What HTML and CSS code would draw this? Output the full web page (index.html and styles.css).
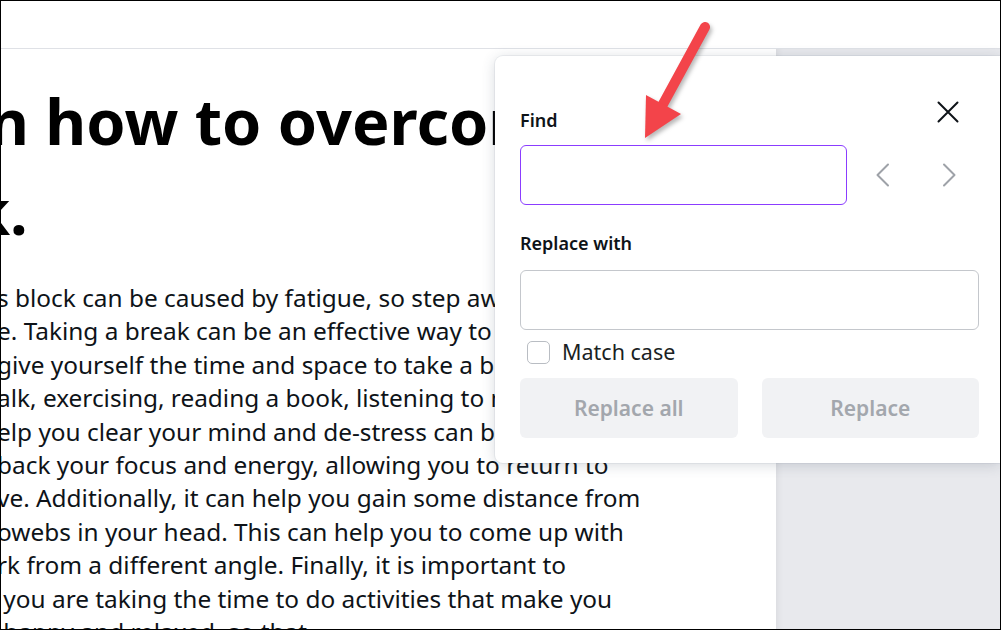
FILE: index.html
```html
<!DOCTYPE html>
<html lang="en">
<head>
<meta charset="utf-8">
<title>Find and replace</title>
<link rel="stylesheet" href="styles.css">
</head>
<body>
<div class="frame">
  <header class="topbar"></header>
  <div class="workspace">
    <main class="page">
      <h1 class="title">
        <span class="title-line">n how to overcome writer’s</span>
        <span class="title-line tail">k.</span>
      </h1>
      <div class="copy">
        <p class="line">s block can be caused by fatigue, so step away from your</p>
        <p class="line">e. Taking a break can be an effective way to recharge and</p>
        <p class="line">give yourself the time and space to take a break. Going</p>
        <p class="line">alk, exercising, reading a book, listening to music, or</p>
        <p class="line">elp you clear your mind and de-stress can be a great</p>
        <p class="line">back your focus and energy, allowing you to return to</p>
        <p class="line">ve. Additionally, it can help you gain some distance from</p>
        <p class="line">owebs in your head. This can help you to come up with</p>
        <p class="line">rk from a different angle. Finally, it is important to</p>
        <p class="line">&nbsp;you are taking the time to do activities that make you</p>
        <p class="line">&nbsp;happy and relaxed, so that</p>
      </div>
    </main>
    <div class="canvas-bg"></div>
  </div>

  <section class="find-panel">
    <div class="panel-head">
      <label class="field-label" for="find">Find</label>
      <button class="icon-btn close-btn" aria-label="Close">
        <svg width="22" height="22" viewBox="0 0 22 22"><path d="M1.5 1.5 L20.5 20.5 M20.5 1.5 L1.5 20.5" stroke="#0e1318" stroke-width="2" fill="none" stroke-linecap="round"/></svg>
      </button>
    </div>
    <div class="find-row">
      <div class="input focused" id="find"></div>
      <div class="nav-btns">
        <button class="icon-btn nav-btn" aria-label="Previous">
          <svg width="14" height="24" viewBox="0 0 14 24"><path d="M12 1.5 L1.5 12 L12 22.5" stroke="#9ea2a8" stroke-width="2" fill="none" stroke-linecap="round" stroke-linejoin="round"/></svg>
        </button>
        <button class="icon-btn nav-btn" aria-label="Next">
          <svg width="14" height="24" viewBox="0 0 14 24"><path d="M2 1.5 L12.5 12 L2 22.5" stroke="#9ea2a8" stroke-width="2" fill="none" stroke-linecap="round" stroke-linejoin="round"/></svg>
        </button>
      </div>
    </div>
    <label class="field-label replace-label">Replace with</label>
    <div class="input"></div>
    <div class="check-row">
      <span class="checkbox"></span>
      <span class="check-text">Match case</span>
    </div>
    <div class="btn-row">
      <button class="btn">Replace all</button>
      <button class="btn">Replace</button>
    </div>
  </section>

  <svg class="arrow" viewBox="0 0 1001 630" width="1001" height="630">
    <g class="arrow-shape">
      <line x1="705" y1="27" x2="662" y2="106" stroke="#f3444a" stroke-width="10" stroke-linecap="round"/>
      <polygon points="645,138 646,95 681,114" fill="#f3444a"/>
    </g>
  </svg>
</div>
</body>
</html>
```

FILE: styles.css
```css
* { box-sizing: border-box; }

html, body {
  margin: 0;
  padding: 0;
  background: #ffffff;
}

.frame {
  position: relative;
  width: 1001px;
  height: 630px;
  border: 1px solid #000000;
  overflow: hidden;
  display: flex;
  flex-direction: column;
  font-family: "Noto Sans", "Open Sans", sans-serif;
  color: #0e1318;
}

.topbar {
  flex: 0 0 48px;
  background: #ffffff;
  border-bottom: 1px solid #dfe1e6;
}

.workspace {
  flex: 1;
  display: flex;
  min-height: 0;
}

.page {
  flex: 0 0 775px;
  background: #ffffff;
  overflow: hidden;
  padding-top: 27px;
}

.canvas-bg {
  flex: 1;
  background: #e8e9ed;
  box-shadow: inset 6px 0 6px -4px rgba(0, 0, 0, 0.06);
}

.title {
  margin: 0 0 0 -13px;
  font-family: "Noto Sans", sans-serif;
  font-weight: 700;
  font-size: 63px;
  line-height: 90px;
  color: #000000;
  white-space: nowrap;
}

.title-line { display: block; }

.title-line.tail { margin-left: -17px; }

.copy {
  margin: 25px 0 0 -4px;
  font-family: "Noto Sans", sans-serif;
  font-size: 24.4px;
  line-height: 33.4px;
  color: #0e1318;
  white-space: nowrap;
}

.line { margin: 0; }

/* Find & replace panel (floating) */
.find-panel {
  position: absolute;
  left: 494px;
  top: 55px;
  width: 505px;
  height: 407px;
  background: #ffffff;
  border-radius: 8px 0 0 8px;
  box-shadow: 0 0 0 1px rgba(64, 87, 109, 0.07), 0 2px 14px rgba(53, 71, 90, 0.2);
  padding: 36px 21px 25px 25px;
  display: flex;
  flex-direction: column;
}

.panel-head {
  height: 40px;
  display: flex;
  align-items: flex-end;
  justify-content: space-between;
}

.field-label {
  font-size: 18px;
  font-weight: 600;
  line-height: 24px;
  color: #0e1318;
}

.icon-btn {
  border: 0;
  background: transparent;
  padding: 0;
  display: flex;
  align-items: center;
  justify-content: center;
}

.close-btn {
  width: 40px;
  height: 40px;
  margin-right: 11px;
  align-self: center;
}

.find-row {
  margin-top: 13px;
  display: flex;
  align-items: center;
}

.find-row .input { flex: 0 0 327px; }

.nav-btns {
  flex: 1;
  display: flex;
  padding-left: 3px;
}

.nav-btn {
  width: 66px;
  height: 40px;
}

.input {
  height: 60px;
  border: 1px solid #c4c7cc;
  border-radius: 6px;
  background: #ffffff;
}

.input.focused {
  border-color: #8b3dff;
}

.replace-label {
  margin-top: 26px;
  margin-bottom: 15px;
}

.check-row {
  margin-top: 8px;
  height: 28px;
  display: flex;
  align-items: center;
  padding-left: 7px;
  gap: 12px;
}

.checkbox {
  width: 23px;
  height: 23px;
  border: 1.5px solid #b9bdc3;
  border-radius: 5px;
  background: #ffffff;
}

.check-text {
  font-size: 21.5px;
  line-height: 28px;
  color: #1b1f24;
}

.btn-row {
  margin-top: 12px;
  display: flex;
  gap: 24px;
}

.btn {
  flex: 1;
  height: 60px;
  border: 0;
  border-radius: 6px;
  background: #f1f2f4;
  color: #a3a7ad;
  font-family: "Noto Sans", sans-serif;
  font-size: 21px;
  font-weight: 600;
}

/* Annotation arrow over everything */
.arrow {
  position: absolute;
  left: -1px;
  top: -1px;
  pointer-events: none;
}

.arrow-shape {
  filter: drop-shadow(2px 3px 2px rgba(0, 0, 0, 0.28));
}
```
